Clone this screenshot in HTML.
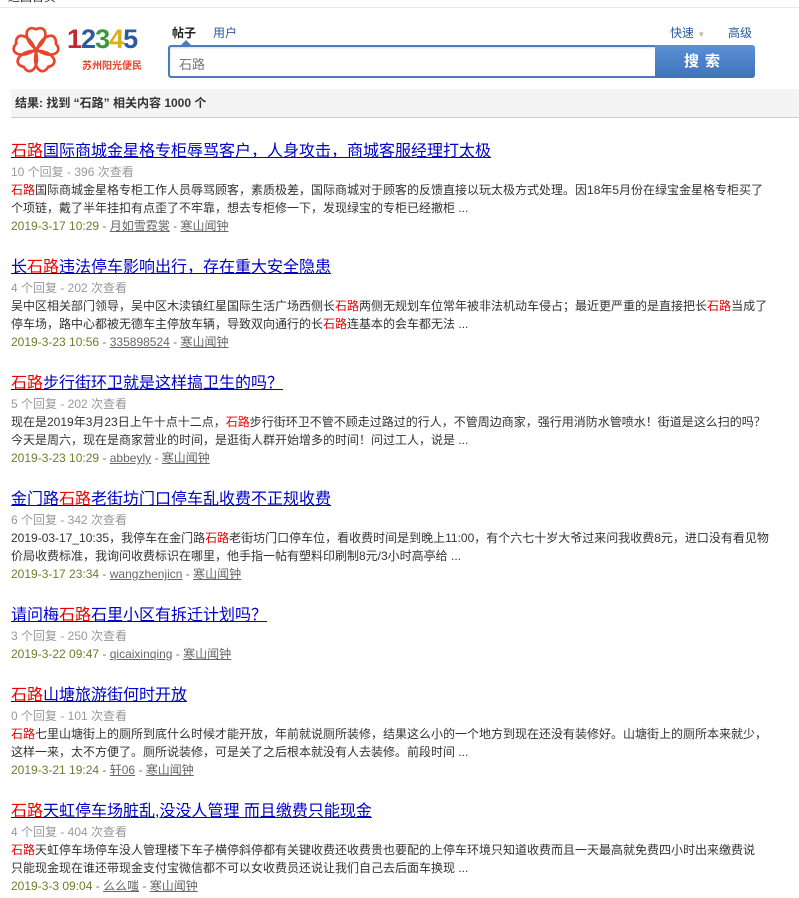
<!DOCTYPE html>
<html><head><meta charset="utf-8">
<style>
*{margin:0;padding:0;box-sizing:border-box}
body{width:799px;height:898px;background:#fff;font-family:"Liberation Sans","Noto Sans CJK SC",sans-serif;font-size:12px;color:#333;position:relative;overflow:hidden}
.topbar{position:absolute;left:0;top:0;width:799px;height:8px;border-bottom:1px solid #e8e8e8;overflow:hidden}
.topbar span{position:absolute;left:8px;top:-12px;font-size:12px;color:#333}
.abs{position:absolute}
.tab{font-size:12px;top:24px}
.input{left:168px;top:45px;width:488px;height:33px;border:2px solid #4a7cc0;border-right:none;background:#fff;border-radius:3px 0 0 3px;box-shadow:inset 0 1px 2px rgba(0,0,0,.15)}
.input span{position:absolute;left:9px;top:7px;font-size:13px;color:#777}
.btn{left:655px;top:45px;width:100px;height:33px;background:linear-gradient(#5a90d6,#3f72b9);border-radius:0 3px 3px 0;color:#fff;font-weight:bold;font-size:15px;text-align:center;line-height:33px;letter-spacing:6px}
.bar{left:11px;top:89px;width:788px;height:29px;background:#f4f4f4;border-bottom:1px solid #ccc;font-weight:bold;font-size:12px;line-height:28px;padding-left:4px;color:#333}
.res{position:absolute;left:11px;white-space:nowrap}
.t{font-size:16px;height:23px;line-height:22px;color:#0000cc;text-decoration:underline}
.r{color:#e00}
.m{color:#999;height:17px;line-height:17px}
.d{line-height:18px;color:#333}
.dt{color:#6b7f2a;line-height:18px}
.dt a{color:#666;text-decoration:underline}
</style></head><body>
<div class="topbar"><span>返回首页</span></div>
<svg class="abs" style="left:11px;top:23px" width="50" height="52" viewBox="0 0 48 50">
<g fill="none" stroke="#e8452c" stroke-width="2.6">
<path d="M24 25 C11 16 13 1 24 6 C35 1 37 16 24 25Z"/>
<path d="M24 25 C11 16 13 1 24 6 C35 1 37 16 24 25Z" transform="rotate(72 24 26)"/>
<path d="M24 25 C11 16 13 1 24 6 C35 1 37 16 24 25Z" transform="rotate(144 24 26)"/>
<path d="M24 25 C11 16 13 1 24 6 C35 1 37 16 24 25Z" transform="rotate(216 24 26)"/>
<path d="M24 25 C11 16 13 1 24 6 C35 1 37 16 24 25Z" transform="rotate(288 24 26)"/>
</g></svg>
<div class="abs" style="left:67px;top:24px;font-size:27px;font-weight:bold;letter-spacing:-1px;font-family:'Liberation Sans',sans-serif"><span style="color:#c4282c">1</span><span style="color:#2a5aa0">2</span><span style="color:#3a9a3a">3</span><span style="color:#d8b020">4</span><span style="color:#2a5aa0">5</span></div>
<div class="abs" style="left:82px;top:57px;font-size:10px;color:#e8452c;font-weight:bold">苏州阳光便民</div>
<div class="abs tab" style="left:172px;font-weight:bold;color:#222">帖子</div>
<div class="abs tab" style="left:213px;color:#2a5aa0">用户</div>
<div class="abs" style="left:181px;top:40px;width:0;height:0;border:5px solid transparent;border-bottom-color:#4a7cc0;border-top:none"></div>
<div class="abs tab" style="left:670px;color:#2a5aa0">快速 <span style="color:#bbb;font-size:8px">▼</span></div>
<div class="abs tab" style="left:728px;color:#2a5aa0">高级</div>
<div class="abs input"><span>石路</span></div>
<div class="abs btn">搜索</div>
<div class="abs bar">结果: 找到 “石路” 相关内容 1000 个</div>

<div class="res" style="top:141px">
<div class="t"><span class="r">石路</span>国际商城金星格专柜辱骂客户，人身攻击，商城客服经理打太极</div>
<div class="m">10 个回复 - 396 次查看</div>
<div class="d"><span class="r">石路</span>国际商城金星格专柜工作人员辱骂顾客，素质极差，国际商城对于顾客的反馈直接以玩太极方式处理。因18年5月份在绿宝金星格专柜买了<br>个项链，戴了半年挂扣有点歪了不牢靠，想去专柜修一下，发现绿宝的专柜已经撤柜 ...</div>
<div class="dt">2019-3-17 10:29 - <a>月如雪霓裳</a> - <a>寒山闻钟</a></div>
</div>

<div class="res" style="top:257px">
<div class="t">长<span class="r">石路</span>违法停车影响出行，存在重大安全隐患</div>
<div class="m">4 个回复 - 202 次查看</div>
<div class="d">吴中区相关部门领导，吴中区木渎镇红星国际生活广场西侧长<span class="r">石路</span>两侧无规划车位常年被非法机动车侵占；最近更严重的是直接把长<span class="r">石路</span>当成了<br>停车场，路中心都被无德车主停放车辆，导致双向通行的长<span class="r">石路</span>连基本的会车都无法 ...</div>
<div class="dt">2019-3-23 10:56 - <a>335898524</a> - <a>寒山闻钟</a></div>
</div>

<div class="res" style="top:373px">
<div class="t"><span class="r">石路</span>步行街环卫就是这样搞卫生的吗？</div>
<div class="m">5 个回复 - 202 次查看</div>
<div class="d">现在是2019年3月23日上午十点十二点，<span class="r">石路</span>步行街环卫不管不顾走过路过的行人，不管周边商家，强行用消防水管喷水！街道是这么扫的吗？<br>今天是周六，现在是商家营业的时间，是逛街人群开始增多的时间！问过工人，说是 ...</div>
<div class="dt">2019-3-23 10:29 - <a>abbeyly</a> - <a>寒山闻钟</a></div>
</div>

<div class="res" style="top:489px">
<div class="t">金门路<span class="r">石路</span>老街坊门口停车乱收费不正规收费</div>
<div class="m">6 个回复 - 342 次查看</div>
<div class="d">2019-03-17_10:35，我停车在金门路<span class="r">石路</span>老街坊门口停车位，看收费时间是到晚上11:00，有个六七十岁大爷过来问我收费8元，进口没有看见物<br>价局收费标准，我询问收费标识在哪里，他手指一帖有塑料印刷制8元/3小时高亭给 ...</div>
<div class="dt">2019-3-17 23:34 - <a>wangzhenjicn</a> - <a>寒山闻钟</a></div>
</div>

<div class="res" style="top:605px">
<div class="t">请问梅<span class="r">石路</span>石里小区有拆迁计划吗？</div>
<div class="m">3 个回复 - 250 次查看</div>
<div class="dt">2019-3-22 09:47 - <a>qicaixinqing</a> - <a>寒山闻钟</a></div>
</div>

<div class="res" style="top:685px">
<div class="t"><span class="r">石路</span>山塘旅游街何时开放</div>
<div class="m">0 个回复 - 101 次查看</div>
<div class="d"><span class="r">石路</span>七里山塘街上的厕所到底什么时候才能开放，年前就说厕所装修，结果这么小的一个地方到现在还没有装修好。山塘街上的厕所本来就少，<br>这样一来，太不方便了。厕所说装修，可是关了之后根本就没有人去装修。前段时间 ...</div>
<div class="dt">2019-3-21 19:24 - <a>轩06</a> - <a>寒山闻钟</a></div>
</div>

<div class="res" style="top:801px">
<div class="t"><span class="r">石路</span>天虹停车场脏乱,没没人管理 而且缴费只能现金</div>
<div class="m">4 个回复 - 404 次查看</div>
<div class="d"><span class="r">石路</span>天虹停车场停车没人管理楼下车子横停斜停都有关键收费还收费贵也要配的上停车环境只知道收费而且一天最高就免费四小时出来缴费说<br>只能现金现在谁还带现金支付宝微信都不可以女收费员还说让我们自己去后面车换现 ...</div>
<div class="dt">2019-3-3 09:04 - <a>么么嗤</a> - <a>寒山闻钟</a></div>
</div>
</body></html>
